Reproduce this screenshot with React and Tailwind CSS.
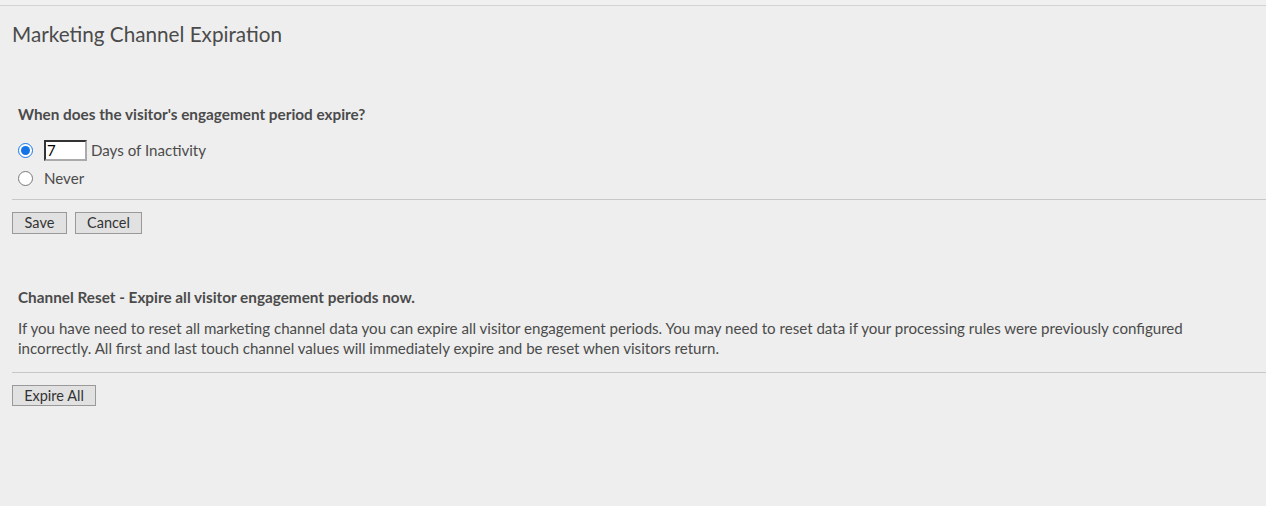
export default function App() {
  return (
    <div
      className="w-[1266px] h-[506px] bg-[#eeeeee] text-[#4b4b4b] overflow-hidden"
      style={{ fontFamily: 'Lato, "Open Sans", sans-serif' }}
    >
      <div className="h-[5px] bg-[#f0f0f0] border-b border-[#d3d3d3] box-content" />

      <h1 className="pl-[12px] pt-[14px] text-[20.7px] leading-[28px] font-normal">Marketing Channel Expiration</h1>

      <div className="pl-[12px] pt-[56px]">
        <div className="pl-[6px]">
          <h2 className="text-[15.3px] font-bold leading-[20px]">When does the visitor's engagement period expire?</h2>

          <div className="mt-[15px] flex items-center h-[22px]">
            <input type="radio" name="exp" defaultChecked className="w-[15px] h-[15px] m-0 accent-[#1473e6]" />
            <input
              type="text"
              defaultValue="7"
              className="ml-[11px] w-[43px] h-[21px] bg-white border-2 border-t-[#333] border-l-[#333] border-b-[#aaa] border-r-[#aaa] px-[1px] text-[15px] text-black outline-none"
            />
            <span className="ml-[4px] text-[15.1px]">Days of Inactivity</span>
          </div>
          <label className="mt-[6px] flex items-center h-[22px]">
            <input type="radio" name="exp" className="w-[15px] h-[15px] m-0" />
            <span className="ml-[11px] text-[15.1px]">Never</span>
          </label>
        </div>

        <div className="mt-[10px] border-t border-[#c8c8c8]" />

        <div className="mt-[12px] flex gap-[8px]">
          <button className="w-[55px] h-[22px] bg-[#e1e1e1] border border-[#999] text-[14.5px] leading-[20px] text-[#333]">Save</button>
          <button className="w-[67px] h-[22px] bg-[#e1e1e1] border border-[#999] text-[14.5px] leading-[20px] text-[#333]">Cancel</button>
        </div>

        <div className="pl-[6px] pt-[53px]">
          <h2 className="text-[15.3px] font-bold leading-[20px]">Channel Reset - Expire all visitor engagement periods now.</h2>
          <p className="mt-[11px] text-[15.1px] leading-[20px] pr-[60px]">
            If you have need to reset all marketing channel data you can expire all visitor engagement periods. You may need to reset data if your processing rules were previously configured incorrectly. All first and last touch channel values will immediately expire and be reset when visitors return.
          </p>
        </div>

        <div className="mt-[14px] border-t border-[#c8c8c8]" />

        <div className="mt-[10px]">
          <button className="w-[84px] h-[21px] bg-[#e1e1e1] border border-[#999] text-[14.5px] leading-[19px] text-[#333]">Expire All</button>
        </div>
      </div>
    </div>
  );
}
